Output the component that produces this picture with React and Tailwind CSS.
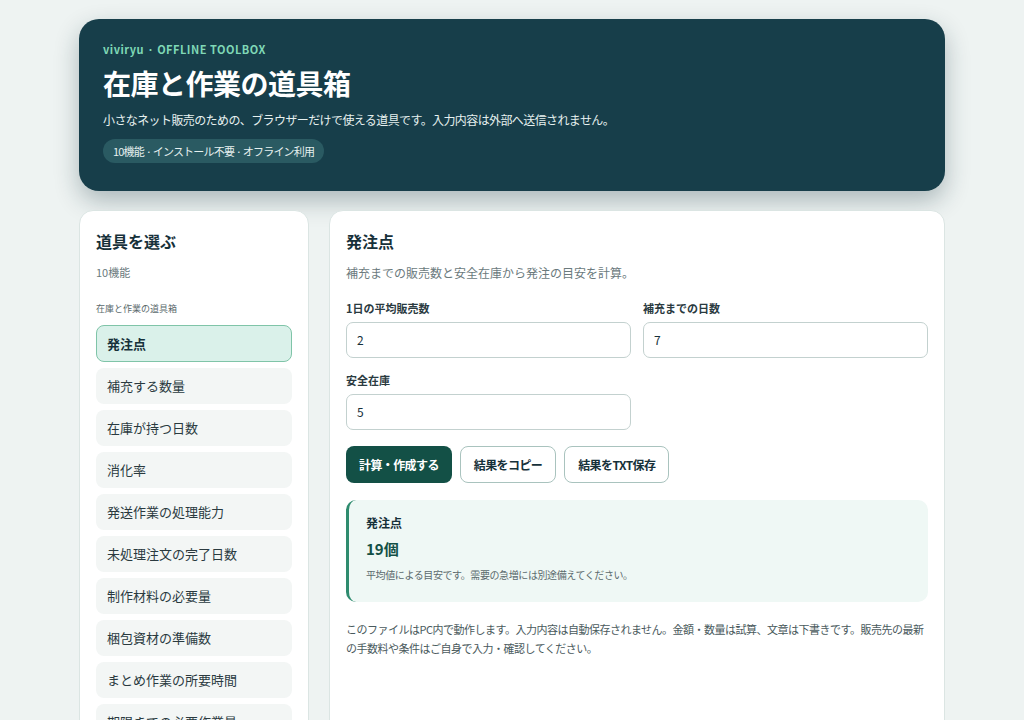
export default function App() {
  const f = { fontFamily: '"Noto Sans CJK JP", "Noto Sans", sans-serif' };
  const items = ["補充する数量","在庫が持つ日数","消化率","発送作業の処理能力","未処理注文の完了日数","制作材料の必要量","梱包資材の準備数","まとめ作業の所要時間","期限までの必要作業量"];
  return (
    <div style={f} className="min-h-[720px] bg-[#eef3f2] pt-[19px]">
      <div className="mx-auto w-[866px]">
        <div className="h-[172px] rounded-[20px] bg-[#173e4a] px-6 pt-[22px] shadow-[0_10px_24px_rgba(20,50,60,0.3)]">
          <div className="text-[11px] font-bold tracking-[0.5px] text-[#7fd8b6] leading-4">viviryu · OFFLINE TOOLBOX</div>
          <h1 className="mt-[6px] text-[28px] font-bold text-white leading-[40px] tracking-[-0.5px]">在庫と作業の道具箱</h1>
          <p className="mt-[7px] text-[12px] tracking-[-0.6px] text-[#e6f0ef] leading-5">小さなネット販売のための、ブラウザーだけで使える道具です。入力内容は外部へ送信されません。</p>
          <span className="mt-[9px] inline-block rounded-full bg-[#2a5a62] px-[10px] py-[3px] text-[11px] tracking-[-0.8px] text-[#e6f0ef] leading-[18px]">10機能 · インストール不要 · オフライン利用</span>
        </div>
        <div className="mt-[19px] flex gap-5 items-start">
          <div className="w-[230px] h-[530px] overflow-hidden rounded-t-[14px] border border-[#dbe5e3] bg-white px-4 pt-[18px]">
            <div className="text-[16px] font-bold text-[#17313a] leading-6">道具を選ぶ</div>
            <div className="mt-[11px] text-[11px] text-[#6b7a7d]">10機能</div>
            <div className="mt-[21px] text-[9px] text-[#5b6a6d]">在庫と作業の道具箱</div>
            <div className="mt-[10px] flex flex-col gap-[6px]">
              <div className="h-[37px] rounded-[8px] border border-[#7fc4a8] bg-[#daf1ea] px-[10px] flex items-center text-[13px] font-bold text-[#17313a]">発注点</div>
              {items.map(t => (
                <div key={t} className="h-[36px] shrink-0 rounded-[8px] bg-[#f3f6f5] px-[11px] flex items-center text-[13px] text-[#2a3a3f]">{t}</div>
              ))}
            </div>
          </div>
          <div className="flex-1 h-[530px] rounded-t-[14px] border border-[#dbe5e3] bg-white px-4 pt-[18px]">
            <div className="text-[16px] font-bold text-[#17313a] leading-6">発注点</div>
            <div className="mt-[11px] text-[12px] text-[#6b7a7d]">補充までの販売数と安全在庫から発注の目安を計算。</div>
            <div className="mt-[18px] grid grid-cols-2 gap-x-[12px] gap-y-[14px]">
              {[["1日の平均販売数","2"],["補充までの日数","7"],["安全在庫","5"]].map(([l,v]) => (
                <div key={l}>
                  <div className="text-[11px] font-bold text-[#2a3a3f] leading-4">{l}</div>
                  <div className="mt-[6px] h-[36px] rounded-[7px] border border-[#c3d1cf] px-[10px] flex items-center text-[12px] text-[#17313a]">{v}</div>
                </div>
              ))}
            </div>
            <div className="mt-[16px] flex gap-[8px]">
              <div className="h-[37px] rounded-[8px] bg-[#135046] px-[13px] flex items-center text-[12px] tracking-[-0.6px] font-bold text-white">計算・作成する</div>
              <div className="h-[37px] rounded-[8px] border border-[#a9c3be] px-[13px] flex items-center text-[12px] tracking-[-0.6px] font-bold text-[#17313a]">結果をコピー</div>
              <div className="h-[37px] rounded-[8px] border border-[#a9c3be] px-[13px] flex items-center text-[12px] tracking-[-0.6px] font-bold text-[#17313a]">結果をTXT保存</div>
            </div>
            <div className="mt-[17px] h-[102px] rounded-[10px] border-l-[3px] border-[#2e8b6e] bg-[#eff8f5] px-[17px] pt-[14px]">
              <div className="text-[12px] font-bold text-[#17313a]">発注点</div>
              <div className="mt-[6px] text-[15px] font-bold text-[#135046]">19個</div>
              <div className="mt-[6px] text-[10px] tracking-[-0.4px] text-[#5b6a6d]">平均値による目安です。需要の急増には別途備えてください。</div>
            </div>
            <p className="mt-[18px] text-[11px] tracking-[-0.5px] text-[#4a5a5d] leading-[19px]">このファイルはPC内で動作します。入力内容は自動保存されません。金額・数量は試算、文章は下書きです。販売先の最新の手数料や条件はご自身で入力・確認してください。</p>
          </div>
        </div>
      </div>
    </div>
  );
}
